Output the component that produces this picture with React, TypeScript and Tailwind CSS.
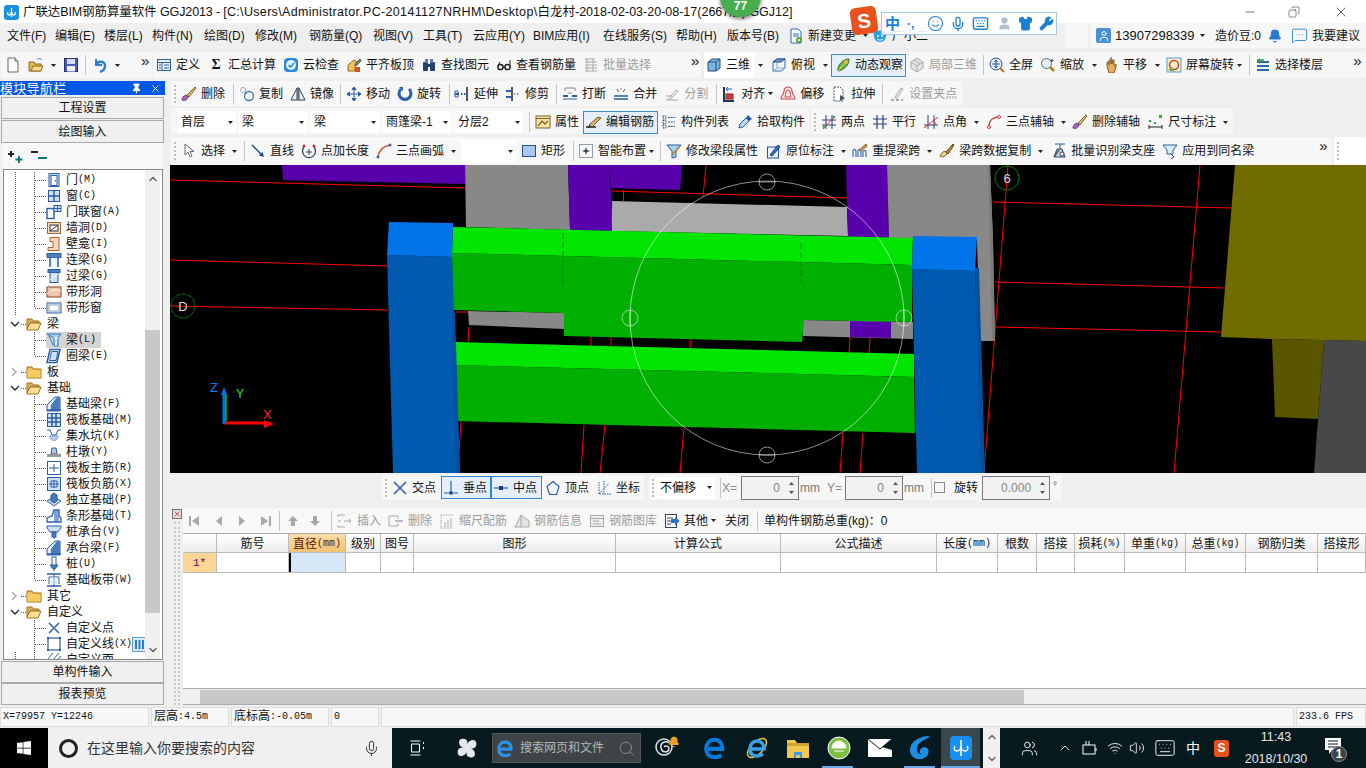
import React from 'react';
import { FaWindows } from 'react-icons/fa';
import { Mic, Search, ChevronUp, ChevronDown, Keyboard, Volume2, Wifi, Users, X, Minus, Copy, Bell, MessageSquareMore, Pin, Shirt, Wrench, User, Smile } from 'lucide-react';

const S16 = ({ children }: { children: React.ReactNode }) => (
  <svg viewBox="0 0 16 16" width="16" height="16" className="block">{children}</svg>
);
const B = '#2a5caa';
const F = '#cfe0f5';
const G = '#a8a8a8';

const ic: Record<string, React.ReactNode> = {
  new: <S16><path d="M3 1h7l3 3v11H3z" fill="#fff" stroke="#666" /><path d="M10 1v3h3" fill="#ddd" stroke="#666" /></S16>,
  open: <S16><path d="M1 5h5l1 2h6v7H1z" fill="#e8b850" stroke="#8a6a20" /><path d="M3 14l2-5h10l-2 5z" fill="#f5d98a" stroke="#8a6a20" /><path d="M9 3c1-2 4-2 5 0" fill="none" stroke="#5a7ab0" /></S16>,
  save: <S16><rect x="1.5" y="1.5" width="13" height="13" fill="#4a5fb0" stroke="#2a3470" /><rect x="4" y="2" width="8" height="5" fill="#d8dcf0" /><rect x="4" y="9" width="8" height="5.5" fill="#eef" /></S16>,
  undo: <S16><path d="M4 2v6h6" fill="none" stroke="#2a7fd0" strokeWidth="2" /><path d="M4 8c2-5 9-4 9 1 0 3-2 5-5 6" fill="none" stroke="#2a7fd0" strokeWidth="2.4" /></S16>,
  define: <S16><rect x="1.5" y="2.5" width="13" height="11" fill="#eaf2fb" stroke="#2f5f99" /><path d="M1.5 5.5h13M6 5.5v8M8 8h5M8 11h5M3 8h2M3 11h2" stroke="#2f5f99" fill="none" /></S16>,
  sigma: <span className="text-[14px] font-bold font-['Liberation_Serif',serif] leading-none">Σ</span>,
  cloud: <S16><rect x="1" y="1" width="14" height="14" rx="4" fill="#2a8ad8" /><circle cx="8" cy="8" r="5" fill="#e8f4ff" /><path d="M5.5 8l2 2 3.5-4" fill="none" stroke="#2a8ad8" strokeWidth="1.6" /></S16>,
  flat: <S16><path d="M2 14V8l6-5 3 2-2 3v6z" fill="#f5c060" stroke="#a06010" /><path d="M9 7l5-5 1 2-5 5z" fill="#7a9a50" stroke="#456" /><rect x="9" y="10" width="5" height="5" fill="#d05020" /></S16>,
  binoc: <S16><rect x="2" y="5" width="5" height="9" rx="1" fill="#24406e" /><rect x="9" y="5" width="5" height="9" rx="1" fill="#24406e" /><rect x="4" y="2" width="3" height="4" fill="#5a7ab0" /><rect x="9" y="2" width="3" height="4" fill="#5a7ab0" /><rect x="6.5" y="7" width="3" height="3" fill="#24406e" /></S16>,
  glass: <S16><circle cx="4.5" cy="10" r="2.6" fill="none" stroke="#222" strokeWidth="1.5" /><circle cx="11.5" cy="10" r="2.6" fill="none" stroke="#222" strokeWidth="1.5" /><path d="M7 10h2M2 9l2-4M14 9V3" stroke="#222" fill="none" /></S16>,
  batch: <S16><path d="M2 2h10M2 5h12M2 8h12M2 11h12M2 14h12M4 2v12M10 2v12" stroke={G} fill="none" /></S16>,
  cube: <S16><path d="M2 5l4-3h8v9l-4 3H2z" fill="#7cb4e0" stroke="#1e4e7c" /><path d="M2 5h8v9M10 5l4-3" fill="none" stroke="#1e4e7c" /></S16>,
  top: <S16><path d="M2 5l4-3h8v9l-4 3H2z" fill="#eef5fc" stroke="#3a6ea5" /><path d="M6 2v9H14M6 11l-4 3" fill="none" stroke="#8ab" /><path d="M2 5l4-3h8l-4 3z" fill="#6a9fd0" stroke="#1e4e7c" /></S16>,
  orbit: <S16><path d="M3 14C2 8 8 2 14 2c0 6-5 11-11 12z" fill="#70b040" stroke="#3a6a1a" /><path d="M3 14L12 4" stroke="#d8e8a0" /><circle cx="11" cy="5" r="2" fill="#e0c040" /></S16>,
  local: <S16><path d="M8 1l6 4v6l-6 4-6-4V5z" fill="#e4e4e4" stroke={G} /><path d="M2 5l6 4 6-4M8 9v6M5 3l6 4" fill="none" stroke={G} /></S16>,
  full: <S16><circle cx="7" cy="7" r="6" fill="#dce8f5" stroke="#2a5588" /><path d="M7 3v8M3 7h8M7 3L5.5 5M7 3l1.500 2M7 11l-1.500-2M7 11l1.500-2" stroke="#2a5588" fill="none" /><path d="M11 11l4 4" stroke="#c07020" strokeWidth="2" /></S16>,
  zoom: <S16><circle cx="6.500" cy="6.500" r="5" fill="#e8f0f8" stroke="#4a6a8a" /><path d="M10 10l4 4" stroke="#b08020" strokeWidth="2.500" /><path d="M12 2v3M10.500 3.500h3" stroke="#444" /></S16>,
  hand: <S16><path d="M4 9V5l1 0 1 3V3h1l1 4V2h1v5l1-4h1v6l2-2v3l-2 6H6z" fill="#e0b060" stroke="#8a5a20" /><path d="M8 0v2" stroke="#446" /></S16>,
  rot: <S16><rect x="1" y="1" width="14" height="14" fill="#f8f0d0" stroke="#5a9ad0" /><circle cx="8" cy="8" r="4.500" fill="none" stroke="#d04020" strokeWidth="1.500" /><path d="M2 13l4-3 2 5z" fill="#70b040" /></S16>,
  floor: <S16><path d="M2 5h12M2 9h12M2 13h12" stroke="#2a6aa8" strokeWidth="2" /><path d="M2 3h7" stroke="#2a9a50" strokeWidth="1.500" /><path d="M5 1L2 4l3 3" fill="#2a9a50" /></S16>,
  del: <S16><path d="M1 14c3 1 5 0 6-3l-2-2c-3 1-4 3-4 5z" fill="#b060c0" stroke="#704080" /><path d="M6 9l8-8 1 1-7 9z" fill="#d8c070" stroke="#806020" /></S16>,
  copy: <S16><circle cx="4" cy="4" r="2.500" fill="none" stroke="#557" strokeDasharray="1 1" /><circle cx="10" cy="10" r="4.500" fill="none" stroke="#47a" strokeWidth="1.300" /><path d="M6 6l2 2" stroke="#47a" /></S16>,
  mirror: <S16><path d="M7 2v12H1zM9 2v12h6z" fill="#e8eef5" stroke="#345" /><path d="M8 1v14" stroke="#345" /></S16>,
  move: <S16><path d="M8 1v14M1 8h14M8 1L6 3.500h4zM8 15l-2-2.500h4zM1 8l2.500-2v4zM15 8l-2.500-2v4z" fill="#2a5caa" stroke="#2a5caa" /></S16>,
  rotate: <S16><path d="M4 3a6 6 0 1 0 8 0" fill="none" stroke="#2a5caa" strokeWidth="3" /><path d="M2 1h4v4z" fill="#2a5caa" /></S16>,
  extend: <S16><path d="M13 1v14" stroke="#222" strokeWidth="1.500" /><path d="M1 8h4M7 8h1.500M10 8h1.500" stroke="#2a5caa" strokeWidth="2" /><path d="M1 5h3v6H1z" fill="none" stroke="#2a5caa" /></S16>,
  trim: <S16><path d="M7 1v14" stroke="#222" strokeWidth="1.500" /><path d="M1 5h6M1 11h6" stroke="#2a5caa" strokeWidth="2" /><path d="M9 8h1.500M12 8h1.500" stroke="#999" strokeWidth="2" /></S16>,
  brk: <S16><path d="M3 2h10M3 2v3M13 2v3" stroke="#888" fill="none" /><path d="M1 10h5M10 10h5" stroke="#2a5caa" strokeWidth="2" /><path d="M1 13h14" stroke="#2a5caa" /><path d="M7 6v2M9 6v2" stroke="#888" /></S16>,
  merge: <S16><path d="M1 10h14M1 13h14" stroke="#2a5caa" strokeWidth="1.500" /><path d="M4 3l2 3M12 3l-2 3" stroke="#555" /><path d="M7 3h2" stroke="#888" /></S16>,
  split: <S16><path d="M2 14h12M4 14l8-10 2 1-8 9" fill="none" stroke={G} /><path d="M2 10h6" stroke={G} /></S16>,
  align: <S16><path d="M3 1v14h10" fill="none" stroke="#203060" strokeWidth="2" /><rect x="5" y="8" width="7" height="5" fill="#d04040" stroke="#802020" /><path d="M11 3H5l2-2M5 3l2 2" fill="none" stroke="#2060c0" /></S16>,
  offset: <S16><path d="M1 13c0-4 3-4 3-8a4 4 0 0 1 8 0c0 4 3 4 3 8z" fill="#fbe4e0" stroke="#c05050" strokeWidth="1.200" /><path d="M5 11c0-2 1-3 1-5a2 2 0 0 1 4 0c0 2 1 3 1 5z" fill="none" stroke="#c05050" /></S16>,
  stretch: <S16><path d="M3 1h6l3 3v11H3z" fill="#fff" stroke="#456" strokeDasharray="2 1" /><path d="M9 9l5 3-5 3z" fill="#456" /></S16>,
  gripd: <S16><path d="M2 14h3M7 14h3M12 14h2" stroke={G} strokeWidth="2" /><path d="M6 11l6-9 2 1-6 9H6z" fill="#e8e8e8" stroke={G} /></S16>,
  prop: <S16><rect x="1" y="2" width="14" height="12" fill="#f8e8b0" stroke="#806020" /><path d="M1 4.500h14" stroke="#806020" /><path d="M3 12l4-5 3 3 3-3" fill="none" stroke="#a06010" strokeWidth="1.500" /></S16>,
  edit: <S16><path d="M0 13h10" stroke="#222" strokeWidth="1.500" /><path d="M3 11l9-8 3 1-9 9z" fill="#d8b870" stroke="#705020" /><path d="M3 11l-1 3 4-1z" fill="#333" /></S16>,
  list: <S16><path d="M2 2h3v3H2zM2 6.500h3v3H2zM2 11h3v3H2z" fill="none" stroke="#345" strokeDasharray="1 .6" /><path d="M7 3.500h7M7 8h7M7 12.500h7" stroke="#2a5caa" strokeDasharray="2 .8" /></S16>,
  pick: <S16><path d="M2 14l1-4 6-6 3 3-6 6z" fill="#bcd8f4" stroke="#2a5caa" /><path d="M9 4l2-3 4 4-3 2z" fill="#2a5caa" /></S16>,
  two: <S16><path d="M5 1v14M11 1v14M1 6h14M1 11h14" stroke="#24407c" fill="none" /><path d="M2 15L14 2" stroke="#d03030" /><circle cx="3" cy="13" r="1.300" fill="#3a3" /><circle cx="13" cy="3" r="1.300" fill="#3a3" /></S16>,
  par: <S16><path d="M5 1v14M11 1v14M1 5h14M1 10h14" stroke="#24407c" fill="none" strokeWidth="1.200" /></S16>,
  ang: <S16><path d="M5 1v14M11 1v14M1 11h14" stroke="#24407c" fill="none" /><path d="M1 14L15 3" stroke="#d03030" /><path d="M12 11a4 4 0 0 0-1-4" fill="none" stroke="#d03030" /></S16>,
  arcax: <S16><path d="M3 13C3 6 7 3 13 3" fill="none" stroke="#d03030" strokeWidth="1.300" /><circle cx="3" cy="13" r="1.500" fill="#fff" stroke="#d03030" /><circle cx="13" cy="3" r="1.500" fill="#fff" stroke="#d03030" /></S16>,
  dim: <S16><path d="M1 11v4M14 11v4M1 13h13" stroke="#222" fill="none" /><rect x="11" y="1" width="3" height="3" fill="#3a3" /><rect x="1" y="6" width="2" height="2" fill="#3a3" /><rect x="6" y="8" width="2" height="2" fill="#3a3" /></S16>,
  sel: <S16><path d="M4 1v11l3-3 2 5 2-1-2-4.500h4z" fill="#fff" stroke="#667" /></S16>,
  line: <S16><path d="M2 2l10 10" stroke="#1a4a8a" strokeWidth="1.500" /><path d="M14 14l-5-1.500 3.500-3.500z" fill="#1a4a8a" /></S16>,
  ptlen: <S16><path d="M3 4a6.500 6.500 0 1 0 10 0" fill="none" stroke="#345" strokeWidth="1.300" /><path d="M8 6v6M5 9h6" stroke="#345" /><circle cx="3" cy="3" r="1.500" fill="#c03030" /><circle cx="13" cy="3" r="1.500" fill="#c03030" /></S16>,
  arc: <S16><path d="M2 14C3 7 7 3 14 2" fill="none" stroke="#d05030" strokeWidth="1.500" /><circle cx="2" cy="14" r="1.500" fill="#36a" /><circle cx="14" cy="2" r="1.500" fill="#36a" /></S16>,
  rect: <S16><rect x="1.500" y="2.500" width="13" height="11" fill="#a8c8f0" stroke="#24509a" /></S16>,
  smart: <S16><rect x="1.500" y="1.500" width="13" height="13" fill="none" stroke="#345" strokeDasharray="1 1" /><path d="M8 4l1 3 3 1-3 1-1 3-1-3-3-1 3-1z" fill="#345" /></S16>,
  mod: <S16><path d="M1 2h14l-5 6v6l-4 1V8z" fill="#a8d0f0" stroke="#24609a" /><path d="M6 12l7-8" stroke="#c08020" strokeWidth="1.500" /></S16>,
  orig: <S16><rect x="1.500" y="4" width="11" height="11" fill="#e8f0fa" stroke="#24509a" /><path d="M4 12l8-10 2 2-8 9z" fill="#3a70c0" stroke="#1a4080" /></S16>,
  relift: <S16><path d="M1 14V8c0-2 3-2 3 0v6M6 14V8c0-2 3-2 3 0v6M11 14V9c0-2 3-2 3 0v5" fill="none" stroke="#4a78b8" strokeWidth="1.300" /><path d="M7 7l7-6 1 2-6 5z" fill="#d8a060" stroke="#806020" /></S16>,
  span: <S16><path d="M1 13c3 2 6 0 7-3L6 8C3 9 2 11 1 13z" fill="#e8d090" stroke="#806020" /><path d="M7 9l7-8 1 1-6 9z" fill="#b89040" stroke="#604010" /></S16>,
  bid: <S16><path d="M4 1h10M9 1v5" stroke="#24609a" /><path d="M3 14l3-8h5l3 8z" fill="#bcd4ec" stroke="#345" /><path d="M8 7l-5 7" stroke="#555" strokeWidth="1.500" /><circle cx="11" cy="11" r="2" fill="#fff" stroke="#345" /></S16>,
  apply: <S16><path d="M1 2h14l-4 5v4H5V7z" fill="#e0ecf8" stroke="#24609a" /><path d="M9 11l3 3-3 2" fill="none" stroke="#24609a" /></S16>,
  cross: <S16><path d="M2 2l12 12M14 2L2 14" stroke="#2a5caa" strokeWidth="1.500" /></S16>,
  perp: <S16><path d="M1 13h14M8 1v12" stroke="#2a5caa" strokeWidth="1.200" /><rect x="6.500" y="11.500" width="3" height="3" fill="#1a3a80" /></S16>,
  mid: <S16><path d="M1 8h14" stroke="#2a5caa" strokeWidth="1.200" /><rect x="6" y="6" width="4" height="4" fill="#1a3a80" /></S16>,
  vert: <S16><path d="M8 1.500l6 5-2.500 8h-7L2 6.500z" fill="#f4f8fc" stroke="#2a5caa" strokeWidth="1.200" /></S16>,
  coord: <S16><path d="M3 2v12h12" fill="none" stroke="#2a5caa" strokeDasharray="1.500 1" /><path d="M3 14L13 3M8 1v13" stroke="#2a5caa" strokeDasharray="1.500 1" /></S16>,
  first: <S16><path d="M4 3v10" stroke={G} strokeWidth="2" /><path d="M13 3v10L6 8z" fill={G} /></S16>,
  prev: <S16><path d="M11 3v10L5 8z" fill={G} /></S16>,
  next: <S16><path d="M5 3v10l6-5z" fill={G} /></S16>,
  last: <S16><path d="M12 3v10" stroke={G} strokeWidth="2" /><path d="M3 3v10l7-5z" fill={G} /></S16>,
  up: <S16><path d="M8 3l5 5h-3v5H6V8H3z" fill={G} /></S16>,
  down: <S16><path d="M8 13l5-5h-3V3H6v5H3z" fill={G} /></S16>,
  ins: <S16><path d="M1 2h7M1 8h3M1 14h7M1 2v2M1 12v2" stroke={G} fill="none" /><path d="M7 8h7M12 6l2 2-2 2" stroke={G} fill="none" /></S16>,
  rem: <S16><path d="M1 3h9v3M1 13h9v-3M1 3v10" stroke={G} fill="none" /><path d="M7 8h8" stroke={G} strokeWidth="1.500" /></S16>,
  scale: <S16><path d="M2 2v13M2 15h13M2 2h12" stroke={G} strokeDasharray="1.500 1" fill="none" /><path d="M6 14V9M9 14V7M12 14V5" stroke={G} /></S16>,
  info: <S16><path d="M1 14l6-12 8 6v6z" fill="#e4e4e4" stroke={G} /><path d="M7 2v12" stroke={G} /></S16>,
  lib: <S16><rect x="1.500" y="2.500" width="13" height="11" fill="#eee" stroke={G} /><path d="M1.500 5.500h13M4 8h6M4 11h8" stroke={G} /></S16>,
  other: <S16><rect x="1.500" y="1.500" width="11" height="13" fill="#fff" stroke="#345" /><path d="M3 5h6M3 8h4M3 11h4" stroke="#345" /><path d="M7 6h4V3.500l4.500 4.500-4.500 4.500V10H7z" fill="#2a70d0" /></S16>,
  file: <S16><path d="M3 1h7l3 3v11H3z" fill="#fff" stroke="#2a6ab0" /><path d="M5 6h6M5 8h6" stroke="#2a6ab0" /><circle cx="11" cy="12" r="3" fill="#50a030" /><path d="M9.500 12h3M11 10.500v3" stroke="#fff" /></S16>,
  xiao: <S16><path d="M2 4c2-2 10-2 12 0 1 5-1 10-6 10S1 9 2 4z" fill="#2aa0e8" /><circle cx="6" cy="8" r="1" fill="#fff" /><circle cx="10" cy="8" r="1" fill="#fff" /><path d="M5 11c2 1.500 4 1.500 6 0" stroke="#fff" fill="none" /></S16>,
  // tree
  door: <S16><rect x="3" y="1.500" width="10" height="13" fill={F} stroke={B} /><rect x="5" y="3.500" width="6" height="10" fill="#fff" stroke={B} /><rect x="9" y="8" width="1" height="1.500" fill={B} /></S16>,
  win: <S16><rect x="2.500" y="2.500" width="11" height="11" fill={F} stroke={B} /><path d="M8 2.500v11M2.500 8h11" stroke={B} strokeWidth="1.500" /></S16>,
  dw: <S16><rect x="1" y="4.500" width="7" height="10" fill="#fff" stroke={B} strokeWidth="1.400" /><rect x="8" y="1.500" width="7" height="6" fill={F} stroke={B} /><path d="M11.500 1.500v6M8 4.500h7" stroke={B} /></S16>,
  hole: <S16><rect x="1.500" y="2.500" width="13" height="11" fill="#f8e0c8" stroke="#b06030" /><rect x="4" y="5" width="8" height="6" fill="#fff" stroke="#333" /><path d="M4 11l8-6" stroke="#333" /></S16>,
  niche: <S16><path d="M4 1.500h9v13H2v-3h5v-6H4z" fill="#f4d8c0" stroke="#b06030" /></S16>,
  lian: <S16><rect x="1" y="1.500" width="14" height="4" fill="#5080c0" stroke={B} /><path d="M4 5.500V15M12 5.500V15" stroke={B} strokeWidth="1.500" fill="none" /><path d="M6 5.500V15M10 5.500V15" stroke={F} fill="none" /></S16>,
  guo: <S16><rect x="2" y="1.500" width="12" height="3" fill="#5080c0" stroke={B} /><rect x="4" y="4.500" width="8" height="10" fill={F} stroke={B} /><path d="M4 12l8-6" stroke="#fff" /></S16>,
  dxd: <S16><rect x="1" y="3" width="14" height="10" fill="#f0c8b0" stroke="#804020" /><path d="M1 10c5-5 9-5 14-3" stroke="#fff" fill="none" /><path d="M3 1v14M13 1v14" stroke="#f0a080" strokeDasharray="1 1" /></S16>,
  dxc: <S16><rect x="1" y="3" width="14" height="10" fill="#e0e8f8" stroke={B} /><rect x="3" y="5" width="10" height="6" fill="#fff" stroke="#8aa8d8" /><path d="M2 1v14M14 1v14" stroke="#f0a080" strokeDasharray="1 1" /></S16>,
  beam: <S16><path d="M1 2h14l-3 4v8H8V6z" fill="#a8d0f0" stroke="#2a7ac0" /><path d="M8 6h4M10 6v8" stroke="#fff" /><path d="M3 4l4 9" stroke="#2a7ac0" /></S16>,
  ring: <S16><path d="M4 1.500h10l-3 13H1z" fill="#fff" stroke={B} strokeWidth="1.500" /><path d="M5.500 3.500h6.500l-2 9H3.500z" fill={F} stroke={B} /></S16>,
  jcl: <S16><path d="M1 15V9l8-8h5v14z" fill="#e0ecf8" stroke={B} /><path d="M5 15V9l6-8h3v14z" fill="#4a7ac0" /><path d="M1 14h14" stroke={B} strokeWidth="1.500" /></S16>,
  raft: <S16><rect x="1.500" y="1.500" width="13" height="13" fill={F} stroke={B} /><path d="M6 1.500v13M10 1.500v13M1.500 6h13M1.500 10h13" stroke={B} strokeWidth="1.500" /></S16>,
  sump: <S16><path d="M1 2h3l2 5h4l2-5h3" fill="none" stroke={B} /><path d="M4 8c1 6 7 6 8 0z" fill="#b8d0ec" stroke={B} strokeDasharray="1 1" /></S16>,
  pier: <S16><path d="M6 4h4l1 6H5z" fill="#b8c8e0" stroke={B} /><rect x="1" y="10" width="14" height="3" fill="#999" /></S16>,
  rz: <S16><rect x="1.500" y="1.500" width="13" height="13" fill="#fff" stroke={B} /><path d="M3 8h10M8 4v8" stroke={B} /></S16>,
  rf: <S16><rect x="1.500" y="1.500" width="13" height="13" fill={F} stroke={B} /><path d="M3 8h10M8 4v8M5 5h6v6H5z" stroke={B} fill="none" /></S16>,
  ind: <S16><path d="M1 9l7-4 7 4-7 5z" fill={F} stroke={B} /><path d="M5 3l3-2 3 2v6l-3 2-3-2z" fill="#4a7ac0" stroke={B} /></S16>,
  strip: <S16><path d="M1 14V10l5-2 2-6h5v6l2 2v4z" fill="#fff" stroke={B} strokeWidth="1.300" /><path d="M8 2h5v12H8z" fill="#4a7ac0" opacity=".7" /></S16>,
  cap: <S16><path d="M1 2h14v2l-3 4H4L1 4z" fill={F} stroke={B} /><rect x="6" y="8" width="4" height="5" fill="#4a7ac0" stroke={B} /><path d="M7 13h2l-1 2z" fill={B} /></S16>,
  pile: <S16><rect x="6" y="1" width="4" height="9" fill="#fff" stroke={B} /><path d="M4 9h8l-3 4h-2z" fill="#4a7ac0" stroke={B} /><path d="M8 13v2" stroke={B} /></S16>,
  band: <S16><path d="M1 2h14M1 14h14" stroke={B} strokeWidth="1.500" /><path d="M3 5h10M3 5v7M13 5v7M8 2v12" stroke={B} /><rect x="5" y="5" width="6" height="7" fill={F} opacity=".6" /></S16>,
  cx: <S16><path d="M3 3l10 10M13 3L3 13" stroke={B} strokeWidth="1.500" /><circle cx="8" cy="8" r="1" fill="#58a" /></S16>,
  cl: <S16><rect x="2" y="2" width="12" height="12" fill="#fff" stroke={B} strokeWidth="1.200" /><path d="M1 1h2v2H1zM13 1h2v2h-2zM1 13h2v2H1zM13 13h2v2h-2z" fill={B} /></S16>,
  cm: <S16><path d="M1 8l6-7M5 10l8-9M9 11l6-7" stroke={B} /></S16>,
};

const I = ({ n }: { n: string }) => <span className="w-4 h-4 shrink-0 flex items-center justify-center">{ic[n]}</span>;

const T = ({ i, l, c = '', d = false }: { i: string; l: string; c?: string; d?: boolean }) => (
  <div className={`flex items-center gap-[4px] shrink-0 ${d ? 'text-[#9c9c9c]' : ''} ${c}`}>
    <I n={i} />
    <span className="whitespace-nowrap">{l}</span>
  </div>
);
const A = ({ c = '' }: { c?: string }) => (
  <svg width="5" height="3" viewBox="0 0 5 3" className={`shrink-0 ${c}`}><path d="M0 0h5L2.500 3z" fill="#222" /></svg>
);
const Sp = ({ c = '' }: { c?: string }) => <div className={`w-px h-[20px] bg-[#c4c4c4] shrink-0 ${c}`} />;
const Gp = ({ c = '' }: { c?: string }) => <div className={`w-[2px] h-[18px] border-l-2 border-dotted border-[#bdbdbd] shrink-0 ${c}`} />;

const Combo = ({ t, c = '' }: { t: string; c?: string }) => (
  <div className={`h-[22px] bg-white flex items-center justify-between pl-[3px] pr-[3px] shrink-0 ${c}`}>
    <span className="whitespace-nowrap">{t}</span>
    <A />
  </div>
);

const Dbl = ({ c = '' }: { c?: string }) => <span className={`text-[15px] leading-none self-start mt-[1px] shrink-0 ${c}`}>»</span>;

const Group = ({ c = '', children }: { c?: string; children: React.ReactNode }) => (
  <div className={`flex items-center h-full bg-[#f7f7f7] rounded-[2px] shrink-0 ${c}`}>{children}</div>
);

const MONO = "font-['Liberation_Mono','Noto_Sans_CJK_SC',monospace]";

const Lbl = ({ s }: { s: string }) => {
  const m = s.match(/^([^(]*)(\(.*\))?$/);
  return (
    <span className="whitespace-nowrap text-[12px] flex items-center">
      <span>{m ? m[1] : s}</span>
      {m && m[2] ? <span className={`${MONO} text-[10px]`}>{m[2]}</span> : null}
    </span>
  );
};

const Dot = '#555';
const Leaf = ({ l, i, top = false, last = false, sel = false, extra }: { l: string; i: string; top?: boolean; last?: boolean; sel?: boolean; extra?: string }) => (
  <div className="h-4 flex items-center">
    <svg width="42" height="16" className="shrink-0">
      {top && <line x1="11.500" y1="0" x2="11.500" y2="16" stroke={Dot} strokeDasharray="1 1" />}
      <line x1="30.500" y1="0" x2="30.500" y2={last ? 8 : 16} stroke={Dot} strokeDasharray="1 1" />
      <line x1="31" y1="8.500" x2="42" y2="8.500" stroke={Dot} strokeDasharray="1 1" />
    </svg>
    <div className={`flex items-center gap-[4px] h-4 ${sel ? 'bg-[#d4d4d4] pr-[5px]' : ''}`}>
      <I n={i} />
      <Lbl s={l} />
    </div>
    {extra ? <div className="ml-auto w-[15px] h-[15px] border border-[#5a9ad8] bg-[#dcecfa] flex items-center justify-center shrink-0"><svg width="11" height="11" viewBox="0 0 11 11"><path d="M1 1h2v9H1zM4.500 1h2v9h-2zM8 1h2v9H8z" fill="#2a7ad0" /></svg></div> : null}
  </div>
);
const Fold = ({ l, open = false }: { l: string; open?: boolean }) => (
  <div className="h-4 flex items-center">
    <svg width="22" height="16" className="shrink-0">
      <path d={open ? 'M7 6l4 4 4-4' : 'M8 4l4 4-4 4'} fill="none" stroke={open ? '#333' : '#aaa'} strokeWidth="1.500" />
      <line x1="17" y1="8.500" x2="22" y2="8.500" stroke={Dot} strokeDasharray="1 1" />
    </svg>
    <svg width="16" height="16" viewBox="0 0 16 16" className="shrink-0">
      {open ? (
        <><path d="M1 3h5l1 2h6v2H4L1 13z" fill="#e0b050" stroke="#9a7020" /><path d="M1 13l3-6h11l-3 7H1z" fill="#f8e098" stroke="#9a7020" /></>
      ) : (
        <><path d="M1 3h5l1 2h8v9H1z" fill="#f0c050" stroke="#9a7020" /><rect x="1.500" y="6" width="13" height="7.500" fill="#f5cc60" /></>
      )}
    </svg>
    <span className="ml-[5px] text-[12px]">{l}</span>
  </div>
);

const NavBtn = ({ t, c = '' }: { t: string; c?: string }) => (
  <div className={`mx-[1px] bg-[#f0f0f0] border border-[#a8a8a8] flex items-center justify-center text-[12px] ${c}`}>{t}</div>
);

const Spin = ({ v, c = '' }: { v: string; c?: string }) => (
  <div className={`h-[24px] border border-[#777] bg-[#f2f2f2] flex items-center justify-end shrink-0 text-[#888] ${c}`}>
    <span className="text-[12px]">{v}</span>
    <div className="w-[13px] ml-[5px] flex flex-col items-center gap-[6px]">
      <svg width="5" height="3" viewBox="0 0 5 3"><path d="M0 3h5L2.500 0z" fill="#555" /></svg>
      <svg width="5" height="3" viewBox="0 0 5 3"><path d="M0 0h5L2.500 3z" fill="#555" /></svg>
    </div>
  </div>
);

const cols: [string, string][] = [
  ['w-[34px]', ''], ['w-[72px]', '筋号'], ['w-[57px]', '直径(mm)'], ['w-[35px]', '级别'], ['w-[33px]', '图号'], ['w-[202px]', '图形'],
  ['w-[165px]', '计算公式'], ['w-[156px]', '公式描述'], ['w-[61px]', '长度(mm)'], ['w-[39px]', '根数'], ['w-[38px]', '搭接'],
  ['w-[50px]', '损耗(%)'], ['w-[61px]', '单重(kg)'], ['w-[60px]', '总重(kg)'], ['w-[72px]', '钢筋归类'], ['w-[48px]', '搭接形'],
];

const Red = ({ d }: { d: string }) => <path d={d} stroke="#ff0000" strokeWidth="1" fill="none" />;

const Scene = () => (
  <svg width="1196" height="308" viewBox="170 165 1196 308" className="block">
    <rect x="170" y="165" width="1196" height="308" fill="#000" />
    <Red d="M170 180L465 188M612 191L847 198M170 260L387 266M170 306L388 310M455 312L468 312M703 197L706 165M623.500 190V201M468 343L469 327M591 336V346M611 336V346M690 349L691 339M849 353L850 337M869 353L870 338M459 452L461 421M581 473L584 425M600 473L605 425M680 473L684 427M840 473L843 433M860 473L863 433" />
    <Red d="M1008 165L984 473M1200 165L1174 473M993 202L1232 208M995 282L1225 288M995 327L1221 332" />
    <polygon points="282,165 465,165 465,184 283,180" fill="#5800ac" />
    <polygon points="610,165 682,165 680,190 611,188" fill="#5800ac" />
    <polygon points="465,165 568,165 570,230 466,227" fill="#888888" />
    <polygon points="612,201 847,207 848,236 611,231" fill="#aaaaaa" />
    <polygon points="568,165 610,165 612,231 570,230" fill="#5800ac" />
    <polygon points="846,165 887,165 889,238 848,237" fill="#5800ac" />
    <polygon points="887,165 990,165 993,240 995,341 980,341 977,240 889,238" fill="#888888" />
    <polygon points="990,165 993,240 995,341 992,341 990,240 988,165" fill="#7a7a7a" />
    <polygon points="468,311 564,313 564,329 469,325" fill="#888888" />
    <polygon points="803,320 913,322 913,339 803,336" fill="#888888" />
    <polygon points="850,321 891,322 891,338 850,337" fill="#5800ac" />
    <polygon points="453,227 913,238 912,265 452,253" fill="#00e600" />
    <polygon points="452,253 912,265 912,322 804,320 802,342 564,336 564,313 453,310" fill="#00b000" />
    <polygon points="455,342 914,354 914,377 455,365" fill="#00e600" />
    <polygon points="455,365 914,377 915,433 456,421" fill="#00b000" />
    <path d="M563 233V288M801 243V283M944 245V290" stroke="#008000" strokeDasharray="6 3" />
    <polygon points="387,255 452,257 460,473 393,473" fill="#005ab0" />
    <polygon points="452,312 455,312 460,473 456,473" fill="#0050a0" />
    <polygon points="389,222 453,223 452,257 387,255" fill="#0074e8" />
    <polygon points="912,269 975,271 984,473 917,473" fill="#005ab0" />
    <polygon points="975,268 979,268 985,473 980,473" fill="#0050a0" />
    <polygon points="913,236 977,237 975,271 912,269" fill="#0074e8" />
    <polygon points="1235,165 1366,165 1366,341 1272,339 1221,337" fill="#706c00" />
    <polygon points="1272,339 1324,340 1318,419 1275,417" fill="#5a5600" />
    <polygon points="1324,340 1366,341 1366,473 1314,473" fill="#484848" />
    <g fill="none" stroke="#ffffff" strokeOpacity=".55">
      <circle cx="767" cy="318" r="137" />
      <circle cx="767" cy="182" r="8" />
      <circle cx="767" cy="455" r="8" />
      <circle cx="630" cy="318" r="8" />
      <circle cx="904" cy="318" r="8" />
      <path d="M630 310v16M904 310v16M759 182h16M759 455h16" />
    </g>
    <circle cx="183" cy="306" r="12" fill="none" stroke="#008000" strokeDasharray="5 1" />
    <circle cx="1007" cy="178" r="12" fill="none" stroke="#008000" />
    <text x="183" y="311" textAnchor="middle" fontSize="13" fill="#ddd" fontFamily="Liberation Sans">D</text>
    <text x="1007" y="183" textAnchor="middle" fontSize="13" fill="#ddd" fontFamily="Liberation Sans">6</text>
    <path d="M224 424V394" stroke="#0074e8" strokeWidth="3" />
    <path d="M226 424V394" stroke="#00d000" strokeWidth="1.500" />
    <path d="M224 387l3 8h-6z" fill="#0074e8" />
    <path d="M225 423h40" stroke="#ff0000" strokeWidth="3" />
    <path d="M274 424l-10-4v8z" fill="#ff0000" />
    <text x="210" y="392" fontSize="13" fill="#0080ff" fontFamily="Liberation Sans">Z</text>
    <text x="236" y="398" fontSize="12" fill="#30e030" fontFamily="Liberation Sans">Y</text>
    <text x="263" y="419" fontSize="13" fill="#ff2020" fontFamily="Liberation Sans">X</text>
  </svg>
);

const St = ({ c, children }: { c: string; children?: React.ReactNode }) => (
  <div className={`h-full bg-[#f7f7f7] border border-[#dcdcdc] flex items-center px-[2px] shrink-0 whitespace-nowrap ${c}`}>{children}</div>
);

const EdgeE = ({ s, col }: { s: number; col: string }) => (
  <svg width={s} height={s} viewBox="0 0 24 24" className="shrink-0">
    <path d="M4 13h16c0-6-3-10-8.500-10S2.500 7 2.500 13s4 9 9.500 9c3 0 5-.8 7-2" fill="none" stroke={col} strokeWidth="4.500" />
  </svg>
);

export default function App() {
  return (
    <div className="relative w-[1366px] h-[768px] overflow-hidden flex flex-col bg-[#efefef] text-[12px] text-[#111] leading-none font-['Liberation_Sans','Noto_Sans_CJK_SC',sans-serif]">
      {/* title bar */}
      <div className="h-[23px] bg-white flex items-center shrink-0 pt-[1px]">
        <div className="ml-[4px] w-[15px] h-[15px] rounded-[3px] bg-[#1b8fe0] flex items-center justify-center">
          <svg width="11" height="11" viewBox="0 0 11 11"><path d="M5.500 1v9M2 5c-1 2 0 3 1 3s2-1 2.500-3M9 5c1 2 0 3-1 3s-2-1-2.500-3" stroke="#fff" fill="none" strokeWidth="1.300" /></svg>
        </div>
        <span className="ml-[4px] whitespace-nowrap text-[12.500px] tracking-[-0.1px]">广联达BIM钢筋算量软件 GGJ2013 - </span>
        <span className="ml-[3px] whitespace-nowrap text-[12.500px] tracking-[0.33px]">[C:\Users\Administrator.PC-20141127NRHM\Desktop\</span>
        <span className="whitespace-nowrap text-[12.500px]">白龙村-2018-02-03-20-08-17(2667版).GGJ12]</span>
        <div className="ml-auto flex items-center">
          <Minus size={14} strokeWidth={1} className="mr-[31px]" />
          <Copy size={12} strokeWidth={1} className="mr-[33px] -scale-x-100" />
          <X size={16} strokeWidth={1} className="mr-[17px]" />
        </div>
      </div>

      {/* menu bar */}
      <div className="h-[25px] flex items-center shrink-0 pl-[7px]">
        <span className="w-[48px]">文件(F)</span>
        <span className="w-[49px]">编辑(E)</span>
        <span className="w-[48px]">楼层(L)</span>
        <span className="w-[52px]">构件(N)</span>
        <span className="w-[51px]">绘图(D)</span>
        <span className="w-[54px]">修改(M)</span>
        <span className="w-[64px]">钢筋量(Q)</span>
        <span className="w-[50px]">视图(V)</span>
        <span className="w-[50px]">工具(T)</span>
        <span className="w-[60px]">云应用(Y)</span>
        <span className="w-[70px]">BIM应用(I)</span>
        <span className="w-[73px]">在线服务(S)</span>
        <span className="w-[51px]">帮助(H)</span>
        <span className="w-[61px]">版本号(B)</span>
        <T i="file" l="新建变更" c="gap-[3px]" />
        <A c="ml-[7px]" />
        <span className="ml-[4px]"><I n="xiao" /></span>
        <span className="ml-[4px]">广小二</span>
        <div className="w-[23px] h-full ml-[137px] bg-[#f7f7f7]" />
        <div className="ml-[3px] flex-1 h-full flex items-center bg-[#f7f7f7]">
          <div className="ml-[5px] w-[15px] h-[15px] rounded-[2px] bg-[#4a90d8] flex items-center justify-center shrink-0"><User size={12} color="#fff" /></div>
          <span className="ml-[4px] text-[13px] w-[77px]">13907298339</span>
          <A c="ml-[8px]" />
          <span className="ml-[10px] w-[47px] whitespace-nowrap">造价豆:0</span>
          <Bell size={14} className="ml-[6px] text-[#2a7ad0] fill-[#2a7ad0]" />
          <MessageSquareMore size={17} strokeWidth={1.300} className="ml-[9px] text-[#2a80d8]" />
          <span className="ml-[4px]">我要建议</span>
        </div>
      </div>

      {/* main toolbar */}
      <div className="h-[33px] shrink-0 pt-[4px] pb-[3px] flex items-stretch">
        <Group c="ml-[1px] w-[151px]">
          <span className="ml-[4px]"><I n="new" /></span>
          <span className="ml-[7px]"><I n="open" /></span>
          <A c="ml-[7px]" />
          <span className="ml-[7px]"><I n="save" /></span>
          <Sp c="ml-[6px]" />
          <span className="ml-[6px]"><I n="undo" /></span>
          <A c="ml-[7px]" />
          <Dbl c="ml-[21px]" />
        </Group>
        <Group c="ml-[1px] w-[548px]">
          <T i="define" l="定义" c="ml-[3px]" />
          <T i="sigma" l="汇总计算" c="ml-[8px]" />
          <T i="cloud" l="云检查" c="ml-[7px]" />
          <T i="flat" l="平齐板顶" c="ml-[7px]" />
          <T i="binoc" l="查找图元" c="ml-[7px]" />
          <T i="glass" l="查看钢筋量" c="ml-[7px]" />
          <T i="batch" l="批量选择" c="ml-[7px]" d />
          <Dbl c="ml-[40px]" />
        </Group>
        <Group c="ml-[3px] flex-1 min-w-0">
          <T i="cube" l="三维" c="pl-[2px] pr-[5px] h-full bg-white" />
          <A c="ml-[3px]" />
          <T i="top" l="俯视" c="ml-[8px]" />
          <A c="ml-[8px]" />
          <T i="orbit" l="动态观察" c="ml-[3px] w-[75px] h-[23px] pl-[3px] border border-[#3a8ad0] bg-[#e4eff9]" />
          <T i="local" l="局部三维" c="ml-[3px]" d />
          <Sp c="ml-[6px]" />
          <T i="full" l="全屏" c="ml-[5px]" />
          <T i="zoom" l="缩放" c="ml-[7px]" />
          <A c="ml-[8px]" />
          <T i="hand" l="平移" c="ml-[6px]" />
          <A c="ml-[8px]" />
          <T i="rot" l="屏幕旋转" c="ml-[6px]" />
          <A c="ml-[3px]" />
          <Sp c="ml-[7px]" />
          <T i="floor" l="选择楼层" c="ml-[5px]" />
          <Dbl c="ml-[30px]" />
        </Group>
      </div>

      {/* main */}
      <div className="h-[624px] flex shrink-0">
        {/* left nav */}
        <div className="w-[165px] shrink-0 flex flex-col">
          <div className="h-[14px] bg-[#0058e6] text-white flex items-center text-[13px] tracking-[0.3px] shrink-0">
            <span className="whitespace-nowrap">模块导航栏</span>
            <Pin size={11} className="ml-auto mr-[8px] fill-white" />
            <X size={11} className="mr-[4px]" />
          </div>
          <NavBtn t="工程设置" c="h-[22px] mt-[2px]" />
          <NavBtn t="绘图输入" c="h-[23px] mt-[1px]" />
          <div className="h-[26px] mx-[2px] bg-[#f8f8f8] flex items-center pl-[5px] gap-[5px] shrink-0">
            <svg width="18" height="16" viewBox="0 0 18 16"><path d="M4 3v6M1 6h6" stroke="#222" strokeWidth="2" /><path d="M12 8v7M8.500 11.500h7" stroke="#0a7a70" strokeWidth="2" /></svg>
            <svg width="18" height="16" viewBox="0 0 18 16"><path d="M1 4h7" stroke="#222" strokeWidth="2" /><path d="M8 10h9" stroke="#0a7a70" strokeWidth="2" /></svg>
          </div>
          <div className="h-[491px] ml-[3px] w-[160px] border border-[#888] bg-white flex overflow-hidden shrink-0">
            <div className="flex-1 min-w-0 overflow-hidden pt-[2px]">
              <Leaf l="门(M)" i="door" top />
              <Leaf l="窗(C)" i="win" top />
              <Leaf l="门联窗(A)" i="dw" top />
              <Leaf l="墙洞(D)" i="hole" top />
              <Leaf l="壁龛(I)" i="niche" top />
              <Leaf l="连梁(G)" i="lian" top />
              <Leaf l="过梁(G)" i="guo" top />
              <Leaf l="带形洞" i="dxd" top />
              <Leaf l="带形窗" i="dxc" top last />
              <Fold l="梁" open />
              <Leaf l="梁(L)" i="beam" sel />
              <Leaf l="圈梁(E)" i="ring" last />
              <Fold l="板" />
              <Fold l="基础" open />
              <Leaf l="基础梁(F)" i="jcl" />
              <Leaf l="筏板基础(M)" i="raft" />
              <Leaf l="集水坑(K)" i="sump" />
              <Leaf l="柱墩(Y)" i="pier" />
              <Leaf l="筏板主筋(R)" i="rz" />
              <Leaf l="筏板负筋(X)" i="rf" />
              <Leaf l="独立基础(P)" i="ind" />
              <Leaf l="条形基础(T)" i="strip" />
              <Leaf l="桩承台(V)" i="cap" />
              <Leaf l="承台梁(F)" i="jcl" />
              <Leaf l="桩(U)" i="pile" />
              <Leaf l="基础板带(W)" i="band" last />
              <Fold l="其它" />
              <Fold l="自定义" open />
              <Leaf l="自定义点" i="cx" />
              <Leaf l="自定义线(X)" i="cl" extra="1" />
              <Leaf l="自定义面" i="cm" top />
            </div>
            <div className="w-[15px] mr-[2px] bg-[#f0f0f0] flex flex-col shrink-0">
              <div className="h-[160px] flex justify-center pt-[3px] shrink-0"><ChevronUp size={12} strokeWidth={3} className="text-[#666]" /></div>
              <div className="h-[283px] bg-[#c8c8c8] shrink-0" />
              <div className="flex-1 flex justify-center items-end pb-[3px]"><ChevronDown size={12} strokeWidth={3} className="text-[#666]" /></div>
            </div>
          </div>
          <NavBtn t="单构件输入" c="h-[22px] mt-[1px]" />
          <NavBtn t="报表预览" c="h-[22px]" />
        </div>

        {/* right */}
        <div className="flex-1 min-w-0 flex flex-col pl-[5px]">
          <div className="h-[25px] flex shrink-0 pl-[1px]">
            <Group>
              <Gp c="ml-[3px]" />
              <T i="del" l="删除" c="ml-[5px]" />
              <Sp c="ml-[8px]" />
              <T i="copy" l="复制" c="ml-[5px]" />
              <T i="mirror" l="镜像" c="ml-[7px]" />
              <Sp c="ml-[6px]" />
              <T i="move" l="移动" c="ml-[5px]" />
              <T i="rotate" l="旋转" c="ml-[7px]" />
              <Sp c="ml-[8px]" />
              <T i="extend" l="延伸" c="ml-[4px]" />
              <T i="trim" l="修剪" c="ml-[7px]" />
              <Sp c="ml-[7px]" />
              <T i="brk" l="打断" c="ml-[5px]" />
              <T i="merge" l="合并" c="ml-[7px]" />
              <T i="split" l="分割" c="ml-[7px]" d />
              <Sp c="ml-[8px]" />
              <T i="align" l="对齐" c="ml-[4px]" />
              <A c="ml-[3px]" />
              <T i="offset" l="偏移" c="ml-[7px]" />
              <T i="stretch" l="拉伸" c="ml-[7px]" />
              <Sp c="ml-[7px]" />
              <T i="gripd" l="设置夹点" c="ml-[6px] pr-[5px]" d />
            </Group>
          </div>
          <div className="h-[26px] mt-[2px] flex shrink-0 pl-[1px]">
            <Group c="pt-[2px]">
              <Combo t="首层" c="ml-[7px] w-[58px]" />
              <Combo t="梁" c="ml-[3px] w-[68px]" />
              <Combo t="梁" c="ml-[4px] w-[68px]" />
              <Combo t="雨篷梁-1" c="ml-[4px] w-[68px]" />
              <Combo t="分层2" c="ml-[4px] w-[68px]" />
              <Sp c="ml-[6px]" />
              <T i="prop" l="属性" c="ml-[5px]" />
              <T i="edit" l="编辑钢筋" c="ml-[4px] w-[75px] h-[23px] pl-[2px] border border-[#3a8ad0] bg-[#e4eff9]" />
              <T i="list" l="构件列表" c="ml-[3px]" />
              <T i="pick" l="拾取构件" c="ml-[8px] pr-[4px]" />
            </Group>
            <Group c="ml-[2px] pt-[2px]">
              <Gp c="ml-[3px]" />
              <T i="two" l="两点" c="ml-[5px]" />
              <T i="par" l="平行" c="ml-[7px]" />
              <T i="ang" l="点角" c="ml-[7px]" />
              <A c="ml-[7px]" />
              <T i="arcax" l="三点辅轴" c="ml-[7px]" />
              <A c="ml-[7px]" />
              <T i="del" l="删除辅轴" c="ml-[6px]" />
              <T i="dim" l="尺寸标注" c="ml-[8px]" />
              <A c="ml-[7px] mr-[5px]" />
            </Group>
          </div>
          <div className="h-[28px] mt-[3px] flex shrink-0 pl-[1px]">
            <Group>
              <Gp c="ml-[3px]" />
              <T i="sel" l="选择" c="ml-[5px]" />
              <A c="ml-[7px]" />
              <Sp c="ml-[7px]" />
              <T i="line" l="直线" c="ml-[5px]" />
              <T i="ptlen" l="点加长度" c="ml-[7px]" />
              <T i="arc" l="三点画弧" c="ml-[7px]" />
              <A c="ml-[7px]" />
              <Combo t="" c="ml-[5px] w-[55px]" />
              <T i="rect" l="矩形" c="ml-[5px]" />
              <Sp c="ml-[8px]" />
              <T i="smart" l="智能布置" c="ml-[4px]" />
              <A c="ml-[3px]" />
              <Sp c="ml-[6px]" />
              <T i="mod" l="修改梁段属性" c="ml-[5px]" />
              <T i="orig" l="原位标注" c="ml-[8px]" />
              <A c="ml-[7px]" />
              <T i="relift" l="重提梁跨" c="ml-[6px]" />
              <A c="ml-[7px]" />
              <T i="span" l="梁跨数据复制" c="ml-[7px]" />
              <A c="ml-[7px]" />
              <T i="bid" l="批量识别梁支座" c="ml-[8px]" />
              <T i="apply" l="应用到同名梁" c="ml-[7px]" />
              <Dbl c="ml-[65px] mr-[4px]" />
            </Group>
            <Group c="ml-[2px] flex-1 bg-white"><Gp c="ml-[3px]" /></Group>
          </div>

          <div className="h-[308px] shrink-0 overflow-hidden"><Scene /></div>

          <div className="h-[35px] shrink-0 pt-[2px] pb-[8px] pl-[212px] flex">
            <Group>
              <Gp c="ml-[3px]" />
              <T i="cross" l="交点" c="ml-[5px]" />
              <T i="perp" l="垂点" c="ml-[5px] w-[50px] h-[23px] pl-[1px] border border-[#2a86d8] bg-[#e4eff9]" />
              <T i="mid" l="中点" c="w-[51px] h-[23px] pl-[1px] border border-[#2a86d8] bg-[#e4eff9]" />
              <T i="vert" l="顶点" c="ml-[3px]" />
              <T i="coord" l="坐标" c="ml-[7px] pr-[4px]" />
            </Group>
            <Group c="ml-[5px]">
              <Gp c="ml-[3px]" />
              <Combo t="不偏移" c="ml-[3px] w-[58px]" />
              <Sp c="ml-[5px]" />
              <span className="ml-[1px] w-[17px] text-[#888]">X=</span>
              <Spin v="0" c="ml-[2px] w-[58px]" />
              <span className="ml-[1px] w-[21px] text-[#777]">mm</span>
              <span className="ml-[6px] w-[16px] text-[#888]">Y=</span>
              <Spin v="0" c="ml-[2px] w-[58px]" />
              <span className="ml-[1px] w-[21px] text-[#777]">mm</span>
              <Sp c="ml-[6px]" />
              <div className="ml-[2px] w-[11px] h-[11px] border border-[#888] bg-[#f4f4f4] shrink-0" />
              <span className="ml-[9px] whitespace-nowrap">旋转</span>
              <Spin v="0.000" c="ml-[4px] w-[68px]" />
              <span className="ml-[3px] pr-[5px] text-[#555] self-start mt-[6px] text-[10px]">°</span>
            </Group>
          </div>

          {/* bottom panel */}
          <div className="h-[197px] shrink-0 flex">
            <div className="w-[13px] shrink-0 flex flex-col items-center pt-[1px]">
              <div className="w-[10px] h-[10px] border border-[#777] bg-[#ead8d8] flex items-center justify-center"><X size={8} strokeWidth={2} className="text-[#a03030]" /></div>
              <div className="mt-[3px] flex-1 w-[6px] border-x-2 border-dotted border-[#c8c8c8]" />
            </div>
            <div className="flex-1 min-w-0 flex flex-col border-b border-[#aaa]">
              <div className="h-[25px] bg-[#f8f8f8] flex items-center shrink-0">
                <span className="ml-[3px]"><I n="first" /></span>
                <span className="ml-[9px]"><I n="prev" /></span>
                <span className="ml-[7px]"><I n="next" /></span>
                <span className="ml-[8px]"><I n="last" /></span>
                <Sp c="ml-[5px]" />
                <span className="ml-[5px]"><I n="up" /></span>
                <span className="ml-[6px]"><I n="down" /></span>
                <Sp c="ml-[8px]" />
                <T i="ins" l="插入" c="ml-[5px]" d />
                <T i="rem" l="删除" c="ml-[7px]" d />
                <T i="scale" l="缩尺配筋" c="ml-[7px]" d />
                <T i="info" l="钢筋信息" c="ml-[7px]" d />
                <T i="lib" l="钢筋图库" c="ml-[7px]" d />
                <T i="other" l="其他" c="ml-[7px]" />
                <A c="ml-[3px]" />
                <span className="ml-[9px]">关闭</span>
                <Sp c="ml-[8px]" />
                <span className="ml-[6px] whitespace-nowrap">单构件钢筋总重(kg)：0</span>
              </div>
              <div className="flex-1 min-h-0 bg-white border-t border-[#aaa] overflow-hidden">
                <div className="flex h-[19px] border-b border-[#bbb]">
                  {cols.map(([w, t], idx) => (
                    <div key={idx} className={`${w} shrink-0 border-r border-[#bbb] flex items-center justify-center overflow-hidden pt-[2px] ${idx === 2 ? 'bg-linear-to-b from-[#fbdca8] to-[#f3c172] text-[#5a1a00]' : 'bg-linear-to-b from-white to-[#ececec]'}`}>
                      <Lbl s={t} />
                    </div>
                  ))}
                </div>
                <div className="flex h-[20px] border-b border-[#bbb]">
                  {cols.map(([w], idx) => (
                    <div key={idx} className={`${w} shrink-0 border-r border-[#bbb] flex items-center justify-center pt-[2px] ${idx === 0 ? 'bg-[#fbd595] text-[#600060]' : idx === 2 ? 'bg-[#d6e8f7] border-l-2 border-l-black' : ''}`}>
                      {idx === 0 ? <span className={`${MONO} text-[11px]`}>1*</span> : null}
                    </div>
                  ))}
                </div>
              </div>
              <div className="h-[16px] shrink-0 bg-[#f0f0f0] border-t border-[#aaa] flex pl-[17px] pt-[1px]">
                <div className="w-[824px] h-[14px] bg-[#c8c8c8]" />
              </div>
            </div>
          </div>
        </div>
      </div>

      {/* status bar */}
      <div className={`h-[23px] shrink-0 pt-[2px] pb-[1px] flex gap-[2px] text-[10px] ${MONO}`}>
        <St c="w-[149px]">X=79957 Y=12246</St>
        <St c="w-[78px]"><span className="text-[12px]">层高</span>:4.5m</St>
        <St c="w-[98px]"><span className="text-[12px]">底标高</span>:-0.05m</St>
        <St c="w-[48px]">0</St>
        <St c="flex-1 shrink"></St>
        <St c="w-[70px]">233.6 FPS</St>
      </div>

      {/* taskbar */}
      <div className="h-[40px] shrink-0 bg-[#071a20] flex items-center text-white">
        <div className="w-[48px] h-full bg-black flex items-center justify-center shrink-0"><FaWindows size={16} /></div>
        <div className="w-[344px] h-full bg-[#f0f0f0] text-[#222] flex items-center shrink-0">
          <div className="ml-[11px] w-[19px] h-[19px] rounded-full border-[3px] border-[#222] shrink-0" />
          <span className="ml-[9px] text-[14px] text-[#333] whitespace-nowrap">在这里输入你要搜索的内容</span>
          <Mic size={17} strokeWidth={1.300} className="ml-auto mr-[12px]" />
        </div>
        <svg width="16" height="16" viewBox="0 0 16 16" className="ml-[17px] shrink-0"><path d="M1.500 1h10M1.500 15h10M2.500 4h8v8h-8z" stroke="#fff" fill="none" /><path d="M14 3h1M14 8h1" stroke="#fff" strokeWidth="2" /></svg>
        <svg width="22" height="22" viewBox="0 0 22 22" className="ml-[31px] shrink-0"><path d="M11 11C5 11 3 8 3 5s3-4 6-3c3 1 3 5 2 9zM11 11c0-6 3-8 6-8s4 3 3 6c-1 3-5 3-9 2zM11 11c6 0 8 3 8 6s-3 4-6 3c-3-1-3-5-2-9zM11 11c0 6-3 8-6 8s-4-3-3-6c1-3 5-3 9-2z" fill="#e4e8ea" /></svg>
        <div className="ml-[14px] w-[149px] h-[30px] bg-[#3e4446] flex items-center shrink-0 border border-[#555]">
          <span className="ml-[4px]"><EdgeE s={17} col="#2a90e8" /></span>
          <span className="ml-[6px] text-[#b4b8ba] whitespace-nowrap">搜索网页和文件</span>
          <Search size={17} strokeWidth={1} className="ml-auto mr-[5px] text-[#aaa]" />
        </div>
        <div className="ml-[13px] relative w-[22px] h-[22px] shrink-0">
          <svg width="20" height="20" viewBox="0 0 20 20"><circle cx="10" cy="10" r="8" fill="none" stroke="#e0e4e6" strokeWidth="1.500" /><path d="M15 6c-4-3-9 0-8 5s7 5 8 1c0-3-3-4-5-2" fill="none" stroke="#e0e4e6" strokeWidth="1.500" /></svg>
          <Bell size={12} className="absolute -top-[1px] right-[-4px] text-[#f0a020] fill-[#f0a020]" />
        </div>
        <span className="ml-[28px]"><EdgeE s={22} col="#0a78d8" /></span>
        <div className="ml-[19px] relative w-[24px] h-[24px] shrink-0">
          <svg width="24" height="24" viewBox="0 0 24 24">
            <ellipse cx="12" cy="12" rx="12" ry="6" transform="rotate(-45 12 12)" fill="none" stroke="#e8c830" strokeWidth="1.500" />
            <path d="M5 13h14c0-5-3-8-7-8s-7 3-7 8 3 7 7 7c2.500 0 4-.8 6-2" fill="none" stroke="#3aa0e8" strokeWidth="3.500" />
          </svg>
        </div>
        <svg width="22" height="22" viewBox="0 0 22 22" className="ml-[18px] shrink-0"><path d="M0 3h8l2 3h12v15H0z" fill="#f0c850" /><rect x="0" y="6" width="22" height="3" fill="#d0a030" /><path d="M7 21v-6h8v6h-2v-3H9v3z" fill="#3a9ae8" /></svg>
        <svg width="24" height="24" viewBox="0 0 24 24" className="ml-[18px] shrink-0"><circle cx="12" cy="12" r="11" fill="#7cc040" stroke="#fff" strokeWidth="1" /><path d="M5 12a7 7 0 0 1 14 0zM7 15h10" fill="#fff" stroke="#fff" /></svg>
        <svg width="24" height="18" viewBox="0 0 24 18" className="ml-[17px] shrink-0"><path d="M0 0h24L14 8l10 3v7H0z" fill="#fff" /><path d="M0 0l12 10L24 0" fill="none" stroke="#071a20" /></svg>
        <svg width="24" height="26" viewBox="0 0 24 26" className="ml-[16px] shrink-0"><path d="M20 1C9 2 2 8 2 15c0 6 5 10 11 9 6-1 9-6 7-10-2-3-7-2-8 1-1 2 1 5 3 4-3 1-7-1-6-6 1-5 6-8 13-11z" fill="#1a90e8" /></svg>
        <div className="ml-[9px] w-[39px] h-full bg-[#3a484e] relative shrink-0 flex items-center justify-center">
          <div className="w-[22px] h-[24px] rounded-[4px] bg-[#1a90ee] flex items-center justify-center">
            <svg width="18" height="18" viewBox="0 0 18 18"><path d="M9 1v16M3 7c-2 3 0 5 2 5s4-2 4-5M15 7c2 3 0 5-2 5s-4-2-4-5" stroke="#fff" fill="none" strokeWidth="1.500" /></svg>
          </div>
          <div className="absolute bottom-0 left-0 right-0 h-[2px] bg-[#66a8e8]" />
        </div>
        <div className="ml-[3px] w-[17px] h-full bg-[#f0f0f0] flex flex-col items-center justify-center gap-[10px] shrink-0 text-[#666]">
          <ChevronUp size={12} strokeWidth={3} />
          <ChevronDown size={12} strokeWidth={3} />
        </div>
        <Users size={17} strokeWidth={1.300} className="ml-[21px] shrink-0" />
        <ChevronUp size={16} strokeWidth={1.300} className="ml-[19px] shrink-0" />
        <svg width="16" height="16" viewBox="0 0 16 16" className="ml-[9px] shrink-0"><rect x="1" y="5" width="12" height="9" fill="none" stroke="#fff" /><path d="M14 8v3M4 1v4M7 1v4" stroke="#fff" /></svg>
        <Wifi size={16} strokeWidth={1.300} className="ml-[9px] shrink-0" />
        <Volume2 size={16} strokeWidth={1.300} className="ml-[6px] shrink-0" />
        <Keyboard size={22} strokeWidth={1} className="ml-[9px] shrink-0" />
        <span className="ml-[10px] text-[14px] shrink-0">中</span>
        <div className="ml-[14px] w-[15px] h-[17px] rounded-[3px] bg-[#e8501c] flex items-center justify-center text-[12px] font-bold shrink-0">S</div>
        <div className="ml-[8px] w-[78px] flex flex-col items-center gap-[9px] text-[12.500px] text-[#e8e8e8] shrink-0">
          <span>11:43</span>
          <span>2018/10/30</span>
        </div>
        <div className="ml-[10px] relative w-[18px] h-[20px] shrink-0">
          <svg width="16" height="18" viewBox="0 0 16 18"><path d="M0 0h16v12H7l-3 4v-4H0z" fill="#fff" /><path d="M3 3h10M3 6h10M3 9h10" stroke="#071a20" /></svg>
          <div className="absolute top-[8px] left-[6px] w-[16px] h-[16px] rounded-full bg-[#3c4448] border border-[#888] text-[12px] font-bold flex items-center justify-center">1</div>
        </div>
      </div>

      {/* taskbar underlines */}
      <div className="absolute left-[822px] bottom-0 w-[31px] h-[2px] bg-[#66a8e8]" />
      <div className="absolute left-[904px] bottom-0 w-[31px] h-[2px] bg-[#66a8e8]" />

      {/* green floating badge */}
      <div className="absolute left-[720px] top-[-24px] w-[41px] h-[41px] rounded-full bg-[#48ad4c] shadow-[0_2px_4px_rgba(0,0,0,0.5)] flex items-end justify-center pb-[5px] text-white text-[12px] font-bold">77</div>

      {/* sogou IME */}
      <div className="absolute left-[851px] top-[6px] flex items-center">
        <div className="w-[26px] h-[27px] rounded-[5px] bg-[#e8501c] rotate-[-8deg] flex items-center justify-center text-white text-[20px] font-bold z-10">S</div>
        <div className="ml-[4px] w-[176px] h-[23px] mt-[6px] bg-white/90 border border-[#a8c8e0] flex items-center text-[#1a80d8]">
          <span className="ml-[3px] text-[15px] font-bold">中</span>
          <span className="ml-[7px] w-[8px] text-[12px] font-bold">·,</span>
          <Smile size={17} strokeWidth={1.500} className="ml-[12px]" />
          <Mic size={16} strokeWidth={2} className="ml-[6px]" />
          <Keyboard size={17} strokeWidth={2} className="ml-[6px]" />
          <User size={15} className="ml-[8px] text-[#b0c0cc] fill-[#b0c0cc]" />
          <Shirt size={15} className="ml-[6px] fill-[#1a80d8]" />
          <Wrench size={15} className="ml-[6px] fill-[#1a80d8]" />
        </div>
      </div>
    </div>
  );
}
